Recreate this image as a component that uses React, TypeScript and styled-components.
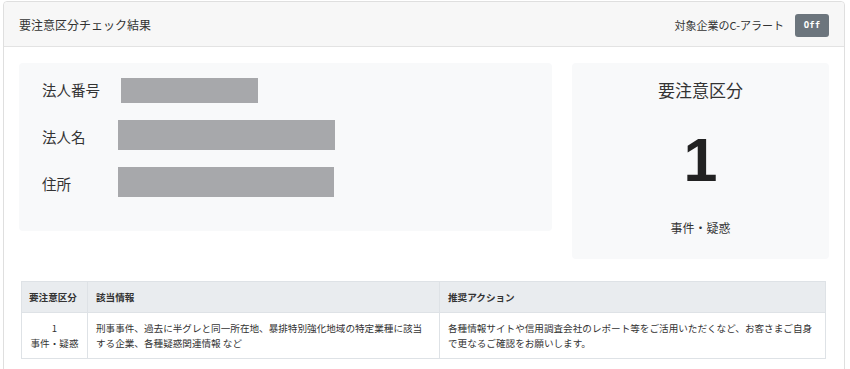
import styled, { createGlobalStyle } from "styled-components";

const GlobalStyle = createGlobalStyle`
  html, body {
    overflow: hidden;
  }
  body {
    margin: 0;
    background: #fff;
    font-family: "Noto Sans CJK JP", "Noto Sans", sans-serif;
    color: #333;
  }
`

const Page = styled.div`
  padding: 1px 5px 0 3px;
`

const Card = styled.section`
  border: 1px solid #dfdfdf;
  border-radius: 4px;
  height: 420px;
  background: #fff;
`

const CardHeader = styled.header`
  height: 44px;
  background: #f7f7f7;
  border-bottom: 1px solid #e3e3e3;
  border-radius: 4px 4px 0 0;
  display: flex;
  align-items: center;
  justify-content: space-between;
  padding: 0 15px;
`

const Title = styled.h1`
  margin: 0;
  font-size: 12px;
  font-weight: 400;
  color: #333;
`

const AlertToggle = styled.div`
  display: flex;
  align-items: center;
  gap: 11px;
  font-size: 11px;
  margin-top: 2px;
`

const OffButton = styled.button`
  width: 34px;
  height: 23px;
  border: none;
  border-radius: 3px;
  background: #6c757d;
  color: #fff;
  font-family: "DejaVu Sans Mono", "Liberation Mono", monospace;
  font-weight: 700;
  font-size: 9px;
  padding: 0;
`

const CardBody = styled.div`
  padding: 16px 15px 0 15px;
`

const TopGrid = styled.div`
  display: grid;
  grid-template-columns: 533px 257px;
  gap: 20px;
`

const Panel = styled.div`
  background: #f8f9fa;
  border-radius: 4px;
`

const InfoPanel = styled(Panel)`
  height: 168px;
  padding: 15px 0 0 23px;
  box-sizing: border-box;
  display: flex;
  flex-direction: column;
  gap: 17px;
`

const InfoRow = styled.div<{ $h: number }>`
  display: grid;
  grid-template-columns: 76px auto;
  align-items: center;
  height: ${(p) => p.$h}px;
`

const Label = styled.span<{ $drop?: number }>`
  font-size: 14.5px;
  color: #333;
  margin-top: ${(p) => p.$drop ?? 3}px;
`

const Masked = styled.div<{ $w: number; $shift?: number }>`
  width: ${(p) => p.$w}px;
  height: 100%;
  margin-left: ${(p) => p.$shift ?? 0}px;
  background: #a7a8ab;
`

const RankPanel = styled(Panel)`
  height: 196px;
  display: flex;
  flex-direction: column;
  align-items: center;
  padding-top: 14px;
  box-sizing: border-box;
`

const RankTitle = styled.div`
  font-size: 17px;
  color: #333;
`

const RankNumber = styled.div`
  font-family: "Liberation Sans", Arial, sans-serif;
  font-weight: 700;
  font-size: 61px;
  line-height: 1;
  color: #222;
  margin-top: 28px;
`

const RankCaption = styled.div`
  font-size: 12px;
  color: #333;
  margin-top: 28px;
`

const Table = styled.table`
  margin: 22px 3px 0 2px;
  width: calc(100% - 5px);
  border-collapse: collapse;
  font-size: 9.6px;
  line-height: 14.4px;
  color: #333;
  table-layout: fixed;

  th, td {
    border: 1px solid #dee2e6;
    padding: 8px 8px;
    text-align: left;
    vertical-align: top;
  }

  th {
    background: #e9ecef;
    font-weight: 700;
  }
`

const RankCell = styled.td`
  && {
    text-align: center;
    padding-left: 4px;
    padding-right: 4px;
  }
`

const RankHead = styled.th`
  && {
    padding-left: 7px;
    padding-right: 4px;
  }
`

export default function App() {
  return (
    <Page>
      <GlobalStyle />
      <Card>
        <CardHeader>
          <Title>要注意区分チェック結果</Title>
          <AlertToggle>
            <span>対象企業のC-アラート</span>
            <OffButton>Off</OffButton>
          </AlertToggle>
        </CardHeader>
        <CardBody>
          <TopGrid>
            <InfoPanel>
              <InfoRow $h={25}>
                <Label $drop={-2}>法人番号</Label>
                <Masked $w={137} $shift={3} />
              </InfoRow>
              <InfoRow $h={30}>
                <Label>法人名</Label>
                <Masked $w={217} />
              </InfoRow>
              <InfoRow $h={30}>
                <Label>住所</Label>
                <Masked $w={216} />
              </InfoRow>
            </InfoPanel>
            <RankPanel>
              <RankTitle>要注意区分</RankTitle>
              <RankNumber>1</RankNumber>
              <RankCaption>事件・疑惑</RankCaption>
            </RankPanel>
          </TopGrid>
          <Table>
            <colgroup>
              <col style={{ width: 66 }} />
              <col style={{ width: 352 }} />
              <col />
            </colgroup>
            <thead>
              <tr>
                <RankHead>要注意区分</RankHead>
                <th>該当情報</th>
                <th>推奨アクション</th>
              </tr>
            </thead>
            <tbody>
              <tr>
                <RankCell>
                  1
                  <br />
                  事件・疑惑
                </RankCell>
                <td>
                  刑事事件、過去に半グレと同一所在地、暴排特別強化地域の特定業種に該当する企業、各種疑惑関連情報 など
                </td>
                <td>
                  各種情報サイトや信用調査会社のレポート等をご活用いただくなど、お客さまご自身で更なるご確認をお願いします。
                </td>
              </tr>
            </tbody>
          </Table>
        </CardBody>
      </Card>
    </Page>
  );
}
